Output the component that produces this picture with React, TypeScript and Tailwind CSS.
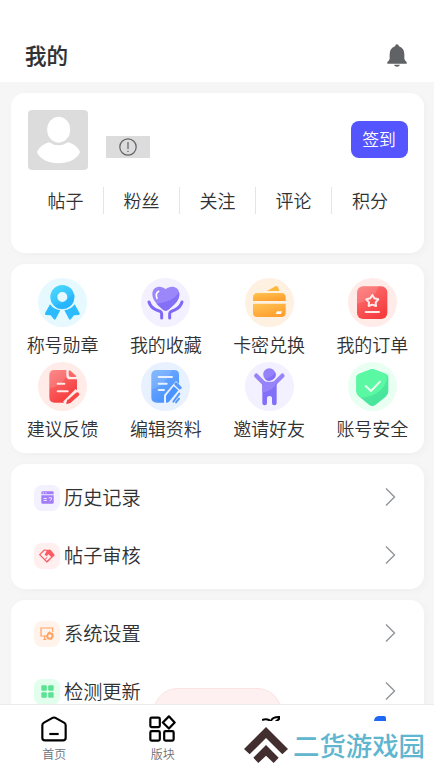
import type { ReactNode } from "react";

interface Tile {
  label: string;
  icon: ReactNode;
}

interface Row {
  label: string;
  bg: string;
  icon: ReactNode;
}

const stats = ["帖子", "粉丝", "关注", "评论", "积分"];

const Gradient = ({ id, from, to }: { id: string; from: string; to: string }) => (
  <linearGradient id={id} x1="0" y1="0" x2="0.6" y2="1">
    <stop offset="0" stopColor={from} />
    <stop offset="1" stopColor={to} />
  </linearGradient>
);

const Round = ({ bg, children }: { bg: string; children: ReactNode }) => (
  <svg viewBox="0 0 147 147" className="size-[49px]">
    <circle cx="73.5" cy="73.5" r="73.5" fill={bg} />
    {children}
  </svg>
);

const tiles: Tile[] = [
  {
    label: "称号勋章",
    icon: (
      <Round bg="#e6f9ff">
        <defs>
          <Gradient id="medal" from="#4edcfe" to="#27b5ff" />
        </defs>
        <path
          d="M36 79Q47 94 67 97L53 123Q51 127 47 123L38 112L24 111Q19 110 21 106ZM110 79Q99 94 79 97L93 123Q95 127 99 123L108 112L122 111Q127 110 125 106Z"
          fill="#2bbcff"
        />
        <path
          fillRule="evenodd"
          d="M73 21a36 36 0 1 0 0 72a36 36 0 1 0 0-72M73 42a15 15 0 1 1 0 30a15 15 0 1 1 0-30"
          fill="url(#medal)"
        />
        <path d="M109 57A36 36 0 0 1 46 81Q70 81 86 66Q92 57 109 48Z" fill="#22b2ff" opacity=".55" />
      </Round>
    ),
  },
  {
    label: "我的收藏",
    icon: (
      <Round bg="#f3f0ff">
        <path
          d="M74 34C62 21 34 23 34 49C34 68 52 83 67 96Q74 101 81 96C97 83 115 68 115 49C115 23 86 21 74 34Z"
          fill="#9c87fa"
        />
        <path d="M114 42C120 66 98 82 81 96Q74 101 67 96L46 77Q96 73 114 42Z" fill="#8470f7" />
        <path d="M53 40Q42 46 48 61" fill="none" stroke="#fff" strokeWidth="5" strokeLinecap="round" />
        <path
          d="M24 72Q29 88 44 95L59 101Q62 103 62 108V120M123 72Q118 88 103 95L90 101Q86 103 86 108V120"
          fill="none"
          stroke="#8068f5"
          strokeWidth="9"
          strokeLinecap="round"
        />
      </Round>
    ),
  },
  {
    label: "卡密兑换",
    icon: (
      <Round bg="#fff1e2">
        <defs>
          <Gradient id="card" from="#ffc453" to="#ff9f30" />
        </defs>
        <path d="M66 39L91 25Q96 22 99 28L104 39Z" fill="#ffb83f" />
        <path d="M38 45H109Q122 45 122 58V69H24V58Q24 45 38 45Z" fill="url(#card)" />
        <path d="M24 77H122V104Q122 117 109 117H38Q24 117 24 104Z" fill="url(#card)" />
        <path d="M96 100H111L108 108H92Z" fill="#fff" />
      </Round>
    ),
  },
  {
    label: "我的订单",
    icon: (
      <Round bg="#ffece9">
        <defs>
          <Gradient id="order" from="#fb7878" to="#f73c3e" />
        </defs>
        <rect x="27" y="25" width="91" height="98" rx="18" fill="url(#order)" />
        <path d="M27 77V43Q27 25 45 25H92Q78 69 27 77Z" fill="#fff" opacity=".13" />
        <path
          d="M73 51L79 61L91 64L83 73L84 84L73 80L62 84L63 73L55 64L67 61Z"
          fill="none"
          stroke="#ffece9"
          strokeWidth="6"
          strokeLinejoin="round"
        />
        <path d="M53 102H93" stroke="#ffece9" strokeWidth="6" strokeLinecap="round" />
      </Round>
    ),
  },
  {
    label: "建议反馈",
    icon: (
      <Round bg="#ffece9">
        <defs>
          <Gradient id="feedback" from="#fb7979" to="#f63a3c" />
        </defs>
        <path
          d="M50 24H85V41Q85 52 97 52H117V86L84 122H50Q34 122 34 106V40Q34 24 50 24Z"
          fill="url(#feedback)"
        />
        <path d="M34 78V40Q34 24 50 24H85V43Q70 76 34 78Z" fill="#fff" opacity=".12" />
        <path d="M92 26Q94 24 97 26L114 41Q116 45 112 45H99Q92 45 92 39Z" fill="#fa6767" />
        <path d="M59 65H79M59 88H89" stroke="#ffece9" strokeWidth="6" strokeLinecap="round" />
        <path d="M120 88L82 126" stroke="#ffece9" strokeWidth="20" />
        <path d="M118 97L95 117" stroke="#f64748" strokeWidth="12" strokeLinecap="round" />
        <path d="M89 112L99 122L87 126Q84 126 85 122Z" fill="#f63f41" />
      </Round>
    ),
  },
  {
    label: "编辑资料",
    icon: (
      <Round bg="#e8f1ff">
        <defs>
          <Gradient id="edit" from="#75b0ff" to="#4790ff" />
        </defs>
        <path
          d="M48 24H100Q114 24 114 38V122H48Q31 122 31 106V40Q31 24 48 24Z"
          fill="url(#edit)"
        />
        <path d="M31 82V40Q31 24 48 24H92Q74 72 31 82Z" fill="#fff" opacity=".12" />
        <path d="M53 45H93M53 65H77M53 84H69" stroke="#e8f1ff" strokeWidth="6" strokeLinecap="round" />
        <path d="M105 57L127 78L118 127H69V99Z" fill="#e8f1ff" />
        <path d="M98 73L112 85L84 119Q81 122 75 122V101Z" fill="#4b94ff" />
        <path d="M105 66L117 77" stroke="#5399ff" strokeWidth="10" strokeLinecap="round" />
        <path d="M115 95L97 119M114 110L105 121" stroke="#5599fd" strokeWidth="6" strokeLinecap="round" />
      </Round>
    ),
  },
  {
    label: "邀请好友",
    icon: (
      <Round bg="#f3f0ff">
        <path
          d="M34 41L58 65H88L112 41"
          fill="none"
          stroke="#9884fa"
          strokeWidth="13"
          strokeLinecap="round"
          strokeLinejoin="round"
        />
        <path
          d="M52 62H95V123Q95 130 88 130Q81 130 81 123V108Q81 102 74 102Q66 102 66 108V123Q66 130 59 130Q52 130 52 123Z"
          fill="#8370f8"
        />
        <path d="M52 59H95Q88 85 52 92Z" fill="#9884fa" />
        <circle cx="73" cy="37" r="20.5" fill="#9581fa" stroke="#f3f0ff" strokeWidth="4" />
        <path d="M91 31A19 19 0 0 1 59 50Q79 48 91 31Z" fill="#8370f8" />
      </Round>
    ),
  },
  {
    label: "账号安全",
    icon: (
      <Round bg="#e8fff1">
        <defs>
          <Gradient id="shield" from="#5df0a2" to="#46e49b" />
        </defs>
        <path
          d="M65 23Q73 19 81 23L112 35Q121 38 121 47V88Q121 98 113 104L82 129Q73 135 64 129L34 104Q25 98 25 88V47Q25 38 34 35Z"
          fill="url(#shield)"
        />
        <path d="M25 84V47Q25 38 34 35L65 23Q73 19 81 23L112 35Q116 36 118 40C119 76 82 108 36 106Q25 98 25 88Z" fill="#5bf8a3" />
        <path
          d="M53 72L69 87L96 59"
          fill="none"
          stroke="#e8fff1"
          strokeWidth="6"
          strokeLinecap="round"
          strokeLinejoin="round"
        />
      </Round>
    ),
  },
];

const historyRows: Row[] = [
  {
    label: "历史记录",
    bg: "bg-[#f3f0ff]",
    icon: (
      <svg viewBox="0 0 40 40" className="size-[13px]">
        <path d="M5 1H35Q39 1 39 5V10H1V5Q1 1 5 1Z" fill="#a27bfb" />
        <path d="M1 13H39V35Q39 39 35 39H5Q1 39 1 35Z" fill="#a27bfb" />
        <path d="M5 6H9M13 6H17M8 23H18M8 29H18M24 21H32V26L27 31" fill="none" stroke="#f3f0ff" strokeWidth="3" />
      </svg>
    ),
  },
  {
    label: "帖子审核",
    bg: "bg-[#ffefef]",
    icon: (
      <svg viewBox="0 0 48 42" className="h-[14px] w-[16px]">
        <path
          d="M24 4L16 3L2 17L24 39L45 18L34 4Z"
          fill="none"
          stroke="#fd5b63"
          strokeWidth="3.5"
          strokeLinejoin="round"
        />
        <path d="M24 4L32 2L46 18L38 26L29 16L22 22L17 17Z" fill="#fd5b63" />
        <path d="M17 32L25 25M23 38L33 29" stroke="#fd5b63" strokeWidth="3" />
      </svg>
    ),
  },
];

const systemRows: Row[] = [
  {
    label: "系统设置",
    bg: "bg-[#fff3eb]",
    icon: (
      <svg viewBox="0 0 42 42" className="size-[14px]">
        <path d="M17 27H3V3H38V14M10 37H19M14 27V36" fill="none" stroke="#ffa25f" strokeWidth="3.5" />
        <path d="M29 13L33 17L39 17L40 24L42 28L38 32L36 38L29 38L23 37L20 32L17 27L21 22L23 17Z" fill="#ffa25f" />
        <circle cx="29.5" cy="27" r="5" fill="#fff3eb" />
      </svg>
    ),
  },
  {
    label: "检测更新",
    bg: "bg-[#e1ffec]",
    icon: (
      <svg viewBox="0 0 38 38" className="size-[13px]" fill="#5ce293">
        <rect x="1" y="1" width="16" height="16" rx="3" />
        <rect x="21" y="1" width="16" height="16" rx="3" />
        <rect x="1" y="21" width="16" height="16" rx="3" />
        <rect x="21" y="21" width="16" height="16" rx="3" />
      </svg>
    ),
  },
];

const RowList = ({ rows }: { rows: Row[] }) => (
  <div className="flex flex-col gap-[31px] pl-[23px] pr-[28px]">
    {rows.map(row => (
      <div key={row.label} className="flex h-[27px] items-center">
        <span className={`flex size-[26px] items-center justify-center rounded-[8px] ${row.bg}`}>
          {row.icon}
        </span>
        <span className="ml-1 flex-1 pb-px text-[19.2px] leading-[26px]">{row.label}</span>
        <svg viewBox="0 0 12 20" className="mb-px h-5 w-3" fill="none" stroke="#909399" strokeWidth="1.4">
          <path d="M2 1.5L10.5 10L2 18.5" />
        </svg>
      </div>
    ))}
  </div>
);

export default function App() {
  return (
    <div
      className="relative flex h-[771px] w-[434px] flex-col overflow-hidden bg-[#f6f6f6] font-[350] text-[#303133]"
      style={{ fontFamily: '"Noto Sans CJK SC", sans-serif' }}>
      <header className="flex h-[82px] shrink-0 items-end justify-between bg-white pb-[13px] pl-[25px] pr-[27px]">
        <h1 className="text-[21.5px] font-medium leading-[29px] [-webkit-text-stroke:0.2px_#303133]">我的</h1>
        <svg viewBox="0 0 60 69" className="mb-[2px] h-[23px] w-5" fill="#606266">
          <path d="M30 1Q35 1 36 7Q52 13 52 30V44Q53 50 59 54V59H1V54Q7 50 8 44V30Q8 13 24 7Q25 1 30 1Z" />
          <path d="M21 62H39Q37 68 30 68Q23 68 21 62Z" />
        </svg>
      </header>

      <main className="flex min-h-0 flex-1 flex-col gap-[11px] overflow-hidden pl-[11px] pr-[10px] pt-[11px]">
        <section className="h-[160px] shrink-0 rounded-[14px] bg-white px-[17px] pt-4 shadow-[2px_2px_8px_rgba(0,0,0,0.03)]">
          <div className="flex h-[62px] items-start">
            <svg viewBox="0 0 180 180" className="mt-px size-[60px]">
              <rect width="180" height="180" rx="12" fill="#dcdcdc" />
              <ellipse cx="92" cy="59" rx="34.5" ry="39" fill="#fff" />
              <path d="M63 97Q91 115 121 97Q146 104 156 126C139 171 44 171 27 126Q38 104 63 97Z" fill="#fff" />
            </svg>
            <div className="ml-[18px] mt-[27px] flex h-[22px] w-[43.5px] items-center justify-center bg-[#dcdcdc]">
              <svg viewBox="0 0 18 18" className="size-[18px]" fill="none" stroke="#606266">
                <circle cx="9" cy="9" r="8.2" strokeWidth="1.2" />
                <path d="M9 4V11M9 12.7V14" strokeWidth="1.2" />
              </svg>
            </div>
            <button className="-mr-px ml-auto mt-3 h-[37px] w-[57px] rounded-[8px] bg-[#5555ff] pb-px pr-px text-[16.8px] leading-[34px] text-white">
              签到
            </button>
          </div>
          <div className="mt-4 flex w-[380px]">
            {stats.map(stat => (
              <div
                key={stat}
                className="flex h-[27px] w-[76px] items-center justify-center border-r border-[#e4e5e8] pb-px text-[18px] last:border-r-0">
                {stat}
              </div>
            ))}
          </div>
        </section>

        <section className="grid h-[189px] shrink-0 grid-cols-4 content-start rounded-[14px] bg-white pt-[14px] shadow-[2px_2px_8px_rgba(0,0,0,0.03)]">
          {tiles.map(tile => (
            <div key={tile.label} className="flex h-[84px] flex-col items-center">
              {tile.icon}
              <span className="mt-1 text-[18px] leading-[26px]">{tile.label}</span>
            </div>
          ))}
        </section>

        <section className="h-[125px] shrink-0 rounded-[14px] bg-white pt-5 shadow-[2px_2px_8px_rgba(0,0,0,0.03)]">
          <RowList rows={historyRows} />
        </section>

        <section className="h-[125px] shrink-0 rounded-[14px] bg-white pt-5 shadow-[2px_2px_8px_rgba(0,0,0,0.03)]">
          <RowList rows={systemRows} />
        </section>
      </main>

      {/* Toast peeking out above the tab bar */}
      <div className="absolute left-[153px] top-[688px] h-[50px] w-[129px] rounded-[25px] border border-[#fde2e2] bg-[#fef0f0]" />

      <nav className="relative grid h-[67px] shrink-0 grid-cols-4 border-t border-[#ececec] bg-white text-[12px] text-[#6d7076]">
        <div className="flex flex-col items-center pt-[11px]">
          <svg viewBox="0 0 78 78" className="size-[26px]" fill="none" stroke="#000" strokeWidth="6.5">
            <path
              d="M36 5Q39 4 42 5L69 20Q74 23 74 28V65Q74 73 66 73H12Q4 73 4 65V28Q4 23 9 20Z"
              strokeLinejoin="round"
            />
            <path d="M25 54H53" />
          </svg>
          <span className="mt-[3px] leading-[18px]">首页</span>
        </div>
        <div className="flex flex-col items-center pt-[10px]">
          <svg viewBox="0 0 80 80" className="size-[27px]" fill="none" stroke="#000" strokeWidth="6.5">
            <rect x="4" y="8" width="28" height="28" rx="4" />
            <rect x="4" y="48" width="28" height="28" rx="4" />
            <rect x="45" y="48" width="28" height="28" rx="4" />
            <path d="M59 4L76 22L59 40L41 22Z" strokeLinejoin="round" />
          </svg>
          <span className="mt-[3px] leading-[18px]">版块</span>
        </div>
        <div className="flex justify-center pt-[11px]">
          <svg viewBox="0 0 18 5" className="h-[5px] w-[18px]" fill="none" stroke="#000" strokeWidth="2">
            <path d="M0 4Q4 2.5 7 4L8 5M9 5Q10 1 17 1V3Q15 5 13 6" />
          </svg>
        </div>
        <div className="flex justify-center pt-[11px]">
          <span className="h-[5px] w-3 rounded-tl-[5px] rounded-tr-[2px] bg-[#1f68f5]" />
        </div>
        <div className="absolute left-[244px] top-[16px] flex h-[50px] w-[190px] items-start bg-white">
          <svg viewBox="0 0 132 108" className="mt-[6px] h-[36px] w-[44px]" fill="#422e2e">
            <path d="M66 0L132 66L115 82L66 33L17 82L0 66Z" />
            <path d="M66 54L104 92L89 108L66 86L43 108L28 92Z" />
          </svg>
          <span className="ml-[5px] mt-[9px] whitespace-nowrap text-[26.4px] font-medium leading-[30px] text-[#60b5cf]">
            二货游戏园
          </span>
        </div>
      </nav>
    </div>
  );
}
